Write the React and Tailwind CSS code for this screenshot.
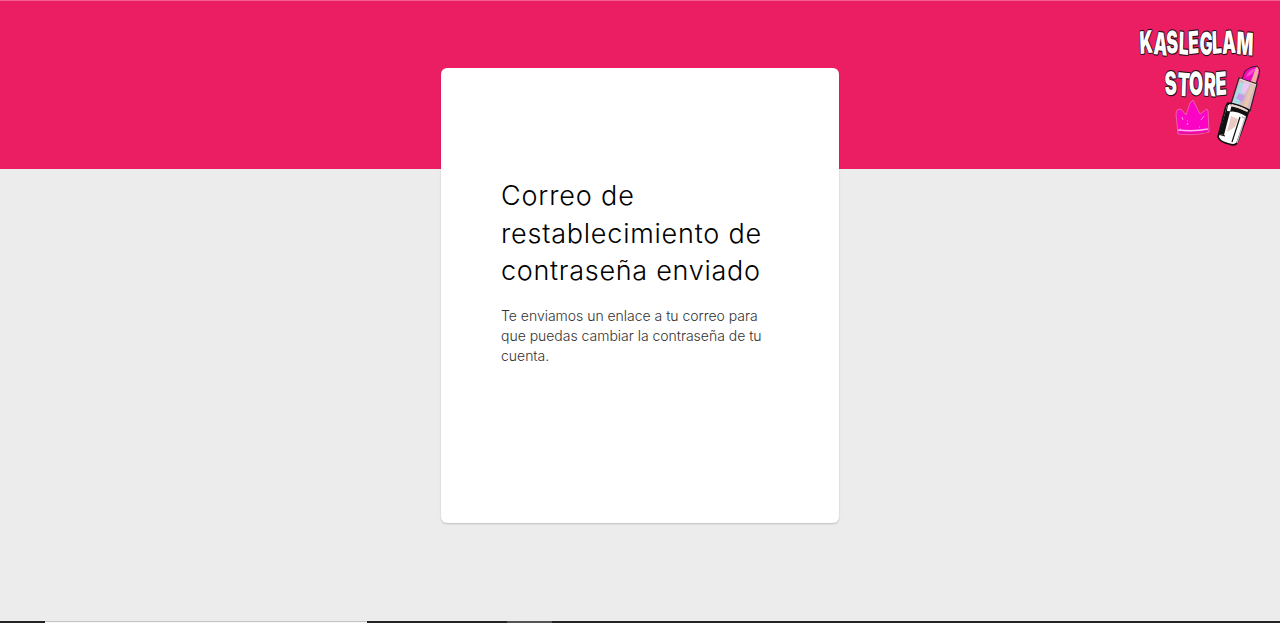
function Wordmark(props) {
  return (
    <g fontFamily="'Inter', sans-serif" fontWeight="900" strokeLinejoin="bevel" fill="#fff">
      <text x="1140" y="54" fontSize="31" textLength="113" lengthAdjust="spacingAndGlyphs" rotate="-4 4 -4 3 -3 3 -3 -3 3" {...props}>KASLEGLAM</text>
      <text x="1165" y="95.5" fontSize="32" textLength="62" lengthAdjust="spacingAndGlyphs" rotate="-4 3 -3 3 -3" {...props}>STORE</text>
    </g>
  );
}

function Logo() {
  return (
    <svg className="h-[130px] w-[140px]" viewBox="1130 20 140 130" role="img" aria-label="Kasleglam Store">
      <Wordmark stroke="#241018" strokeWidth="2.4" paintOrder="stroke" />
      <path d="M1177 110l4-1 5 6 4-12 3-3 7 14 7-5 1 2 1 21q-14 4-31 2l-2-20z" fill="#fb04c4" stroke="#ee72b1" strokeWidth=".8" />
      <path d="M1178 130q16 2 30-1" fill="none" stroke="#fbb8e9" strokeWidth="1.4" />
      <path d="M1179 133q14 1 28-1" fill="none" stroke="#e11679" strokeWidth="1" />
      <path d="M1182 117l1 3m4 5l1-2m13-3l3-4m-17 5h1m11 6h1m-20 2h1" fill="none" stroke="#ffb3e9" strokeWidth=".8" />

      <path d="M1242 79l3-8q6-5 12-5 4 3 2 9l-4 13-13-4z" fill="#f10bb9" stroke="#3a1826" strokeWidth="1" />
      <path d="M1256 67q4 1 2 7l-3 11-5-1q3-8 6-17z" fill="#efb09f" />
      <path d="M1246 77q2-7 10-9-3 7-10 9z" fill="#f54bd0" />
      <path d="M1239 78l18 6-7 27-19-7z" fill="#d7b9c2" stroke="#31202a" strokeWidth="1.2" />
      <path d="M1240 82l6 2-7 22-7-2z" fill="#a9dce5" />
      <path d="M1244 82l6 2-5 10-4-2z" fill="#eac6f0" />
      <path d="M1239 93l6 3-3 6-6-4z" fill="#c79be7" />
      <path d="M1251 85l3 1-7 22-4-1z" fill="#e7c8ae" />
      <path d="M1240 79l16 6" stroke="#f3ddd5" strokeWidth="1.2" />
      <path d="M1228 103q10 1 21 7l-2 6-10 27q-2 3-8 1-9-2-11-7l8-31z" fill="#fff" stroke="#110e14" strokeWidth="1.7" />
      <path d="M1228 103l4 1-8 31-5-1zM1227 111q12 0 20 6l1-5q-10-5-20-7z" fill="#111" />
      <path d="M1229 105q9 1 18 6" fill="none" stroke="#ead5cc" strokeWidth="1.8" />
      <path d="M1231 116l7 3-3 8-8 5z" fill="#e9cbc2" />
      <path d="M1242 117l3 1-8 25" fill="none" stroke="#bcb7ba" strokeWidth="1.4" />
      <path d="M1240 117l-8 25M1218 134l7 2" fill="none" stroke="#111" strokeWidth="1.2" />
    </svg>
  );
}

export default function App() {
  return (
    <div className="flex h-[623px] w-full flex-col overflow-hidden bg-[#ececec] font-['Inter',sans-serif]">
      <header className="flex h-[169px] shrink-0 items-start justify-end border-t border-[#f4608e] bg-[#ec1e63] pt-[19px] pr-[10px]">
        <Logo />
      </header>
      <main className="z-10 -mt-[101px] flex h-[553px] shrink-0 justify-center">
        <section className="h-[455px] w-[398px] rounded-md bg-white px-[60px] pt-[109px] shadow-[0_1px_2px_rgba(0,0,0,0.2)]">
          <h1 className="text-[27px] leading-[37.5px] font-[350] whitespace-nowrap text-black">
            <span className="block tracking-[0.85px]">Correo de</span>
            <span className="block tracking-[0.77px]">restablecimiento de</span>
            <span className="block tracking-[0.7px]">contraseña enviado</span>
          </h1>
          <p className="mt-[16px] text-[14px] leading-5 font-light tracking-[-0.02px] whitespace-nowrap text-[#333]">
            <span className="block">Te enviamos un enlace a tu correo para</span>
            <span className="block">que puedas cambiar la contraseña de tu</span>
            <span className="block">cuenta.</span>
          </p>
        </section>
      </main>
      <footer className="flex h-[2px] shrink-0 bg-[#242223]">
        <div className="ml-[45px] h-[2px] w-[322px] border-t border-[#c4c4c4] bg-[#f7f7f7]" />
        <div className="ml-[140px] h-[2px] w-[45px] bg-[#555354]" />
      </footer>
    </div>
  );
}
